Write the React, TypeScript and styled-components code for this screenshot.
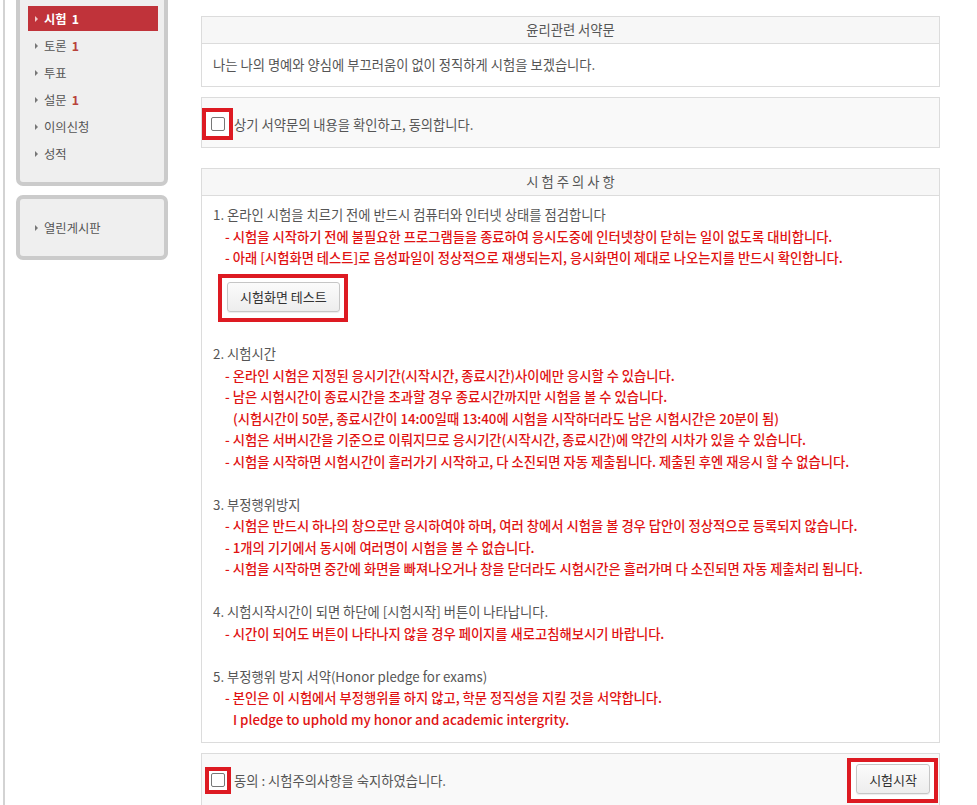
import React from "react";
import styled, { createGlobalStyle } from "styled-components";

const GlobalStyle = createGlobalStyle`
  html, body {
    margin: 0;
    padding: 0;
    background: #fff;
  }
  body {
    font-family: "Noto Sans CJK KR", "Noto Sans", sans-serif;
    font-size: 13.3px;
    color: #555;
    overflow: hidden;
  }
  * {
    box-sizing: border-box;
  }
`;

const Page = styled.div`
  display: flex;
  align-items: stretch;
  min-height: 805px;
  padding-left: 3px;
`;

const Sidebar = styled.aside`
  flex: 0 0 auto;
  border-left: 2px solid #d3d3d3;
  padding-left: 11px;
`;

const MenuBox = styled.div<{ $first?: boolean }>`
  width: 152px;
  margin-top: ${(p) => (p.$first ? "-14px" : "9px")};
  padding: 16px 6px 14px 8px;
  border: 4px solid #cbcbcb;
  border-radius: 7px;
  background: #efefef;
`;

const MenuItem = styled.div<{ $active?: boolean }>`
  display: flex;
  align-items: center;
  height: 25px;
  margin-bottom: 2px;
  padding-left: 7px;
  background: ${(p) => (p.$active ? "#c0333a" : "transparent")};
  color: ${(p) => (p.$active ? "#fff" : "#555")};
  font-weight: ${(p) => (p.$active ? 700 : 400)};
  font-size: 12.3px;

  &::before {
    content: "";
    border-left: 3px solid ${(p) => (p.$active ? "#f1c9c9" : "#777")};
    border-top: 3px solid transparent;
    border-bottom: 3px solid transparent;
    margin-right: 6px;
  }
`;

const Count = styled.span<{ $active?: boolean }>`
  margin-left: 5px;
  font-weight: 700;
  color: ${(p) => (p.$active ? "#fff" : "#b8423a")};
`;

const Main = styled.main`
  width: 739px;
  margin-left: 33px;
  padding-top: 16px;
`;

const Panel = styled.section<{ $bg?: string; $gap?: number }>`
  border: 1px solid #dcdcdc;
  background: ${(p) => p.$bg || "#fff"};
  margin-bottom: ${(p) => p.$gap ?? 10}px;
`;

const PanelHeader = styled.div`
  height: 27px;
  line-height: 26px;
  border-bottom: 1px solid #dcdcdc;
  background: #f7f7f7;
  text-align: center;
  color: #555;
`;

const PledgeBody = styled.div`
  height: 42px;
  line-height: 42px;
  padding-left: 11px;
`;

const AgreeRow = styled.label<{ $pad: string }>`
  display: flex;
  align-items: center;
  padding: ${(p) => p.$pad};
  color: #555;
`;

const Highlight = styled.span<{ $pad: string }>`
  display: inline-flex;
  align-items: center;
  border: 4px solid #dd1a22;
  background: #fff;
  padding: ${(p) => p.$pad};
`;

const CheckBox = styled.input.attrs({ type: "checkbox" })`
  appearance: none;
  width: 14px;
  height: 14px;
  margin: 0;
  border: 1px solid #777;
  border-radius: 2px;
  background: #fff;
`;

const AgreeText = styled.span<{ $gap: number }>`
  margin-left: ${(p) => p.$gap}px;
`;

const NoticeBody = styled.div`
  padding: 8px 11px 12px;
  line-height: 21.5px;
`;

const Group = styled.div`
  margin-bottom: 21.5px;

  &:last-child {
    margin-bottom: 0;
  }
`;

const Title = styled.div`
  color: #555;
`;

const Warn = styled.div<{ $indent?: number }>`
  padding-left: ${(p) => p.$indent ?? 12}px;
  color: #e01212;
  font-weight: 500;
`;

const TestWrap = styled.div`
  margin: 5px 0 0 5px;
`;

const Button = styled.button`
  height: 30px;
  padding: 0 12px;
  border: 1px solid #c6c6c6;
  border-radius: 3px;
  background: linear-gradient(#fbfbfb, #ededed);
  box-shadow: 0 1px 1px rgba(0, 0, 0, 0.08);
  font-family: inherit;
  font-size: 13px;
  color: #333;
`;

const StartBar = styled.div`
  display: flex;
  align-items: center;
  justify-content: space-between;
  padding: 4px 1px 4px 3px;
`;

const menu = [
  { label: "시험", count: 1, active: true },
  { label: "토론", count: 1 },
  { label: "투표" },
  { label: "설문", count: 1 },
  { label: "이의신청" },
  { label: "성적" },
];

const notices = [
  {
    title: "1. 온라인 시험을 치르기 전에 반드시 컴퓨터와 인터넷 상태를 점검합니다",
    lines: [
      "- 시험을 시작하기 전에 불필요한 프로그램들을 종료하여 응시도중에 인터넷창이 닫히는 일이 없도록 대비합니다.",
      "- 아래 [시험화면 테스트]로 음성파일이 정상적으로 재생되는지, 응시화면이 제대로 나오는지를 반드시 확인합니다.",
    ],
    test: true,
  },
  {
    title: "2. 시험시간",
    lines: [
      "- 온라인 시험은 지정된 응시기간(시작시간, 종료시간)사이에만 응시할 수 있습니다.",
      "- 남은 시험시간이 종료시간을 초과할 경우 종료시간까지만 시험을 볼 수 있습니다.",
      "  (시험시간이 50분, 종료시간이 14:00일때 13:40에 시험을 시작하더라도 남은 시험시간은 20분이 됨)",
      "- 시험은 서버시간을 기준으로 이뤄지므로 응시기간(시작시간, 종료시간)에 약간의 시차가 있을 수 있습니다.",
      "- 시험을 시작하면 시험시간이 흘러가기 시작하고, 다 소진되면 자동 제출됩니다. 제출된 후엔 재응시 할 수 없습니다.",
    ],
  },
  {
    title: "3. 부정행위방지",
    lines: [
      "- 시험은 반드시 하나의 창으로만 응시하여야 하며, 여러 창에서 시험을 볼 경우 답안이 정상적으로 등록되지 않습니다.",
      "- 1개의 기기에서 동시에 여러명이 시험을 볼 수 없습니다.",
      "- 시험을 시작하면 중간에 화면을 빠져나오거나 창을 닫더라도 시험시간은 흘러가며 다 소진되면 자동 제출처리 됩니다.",
    ],
  },
  {
    title: "4. 시험시작시간이 되면 하단에 [시험시작] 버튼이 나타납니다.",
    lines: ["- 시간이 되어도 버튼이 나타나지 않을 경우 페이지를 새로고침해보시기 바랍니다."],
  },
  {
    title: "5. 부정행위 방지 서약(Honor pledge for exams)",
    lines: [
      "- 본인은 이 시험에서 부정행위를 하지 않고, 학문 정직성을 지킬 것을 서약합니다.",
      "  I pledge to uphold my honor and academic intergrity.",
    ],
  },
];

const App = () => {
  return (
    <>
      <GlobalStyle />
      <Page>
        <Sidebar>
          <MenuBox $first>
            {menu.map((m) => (
              <MenuItem key={m.label} $active={m.active}>
                {m.label}
                {m.count ? <Count $active={m.active}>{m.count}</Count> : null}
              </MenuItem>
            ))}
          </MenuBox>
          <MenuBox>
            <MenuItem>열린게시판</MenuItem>
          </MenuBox>
        </Sidebar>

        <Main>
          <Panel>
            <PanelHeader>윤리관련 서약문</PanelHeader>
            <PledgeBody>나는 나의 명예와 양심에 부끄러움이 없이 정직하게 시험을 보겠습니다.</PledgeBody>
          </Panel>

          <Panel $bg="#f9f9f9" $gap={20}>
            <AgreeRow $pad="10px 0 7px">
              <Highlight $pad="5px 4px 5px 5px">
                <CheckBox />
              </Highlight>
              <AgreeText $gap={1}>상기 서약문의 내용을 확인하고, 동의합니다.</AgreeText>
            </AgreeRow>
          </Panel>

          <Panel>
            <PanelHeader>시 험 주 의 사 항</PanelHeader>
            <NoticeBody>
              {notices.map((n) => (
                <Group key={n.title}>
                  <Title>{n.title}</Title>
                  {n.lines.map((l) =>
                    l.startsWith("  ") ? (
                      <Warn key={l} $indent={20}>
                        {l.trim()}
                      </Warn>
                    ) : (
                      <Warn key={l}>{l}</Warn>
                    )
                  )}
                  {n.test && (
                    <TestWrap>
                      <Highlight $pad="4px 4px 6px 5px">
                        <Button type="button">시험화면 테스트</Button>
                      </Highlight>
                    </TestWrap>
                  )}
                </Group>
              ))}
            </NoticeBody>
          </Panel>

          <Panel $bg="#f9f9f9">
            <StartBar>
              <AgreeRow $pad="0">
                <Highlight $pad="2px 2px 3px 2px">
                  <CheckBox />
                </Highlight>
                <AgreeText $gap={3}>동의 : 시험주의사항을 숙지하였습니다.</AgreeText>
              </AgreeRow>
              <Highlight $pad="2px 4px 5px 5px">
                <Button type="button">시험시작</Button>
              </Highlight>
            </StartBar>
          </Panel>
        </Main>
      </Page>
    </>
  );
};

export default App;
